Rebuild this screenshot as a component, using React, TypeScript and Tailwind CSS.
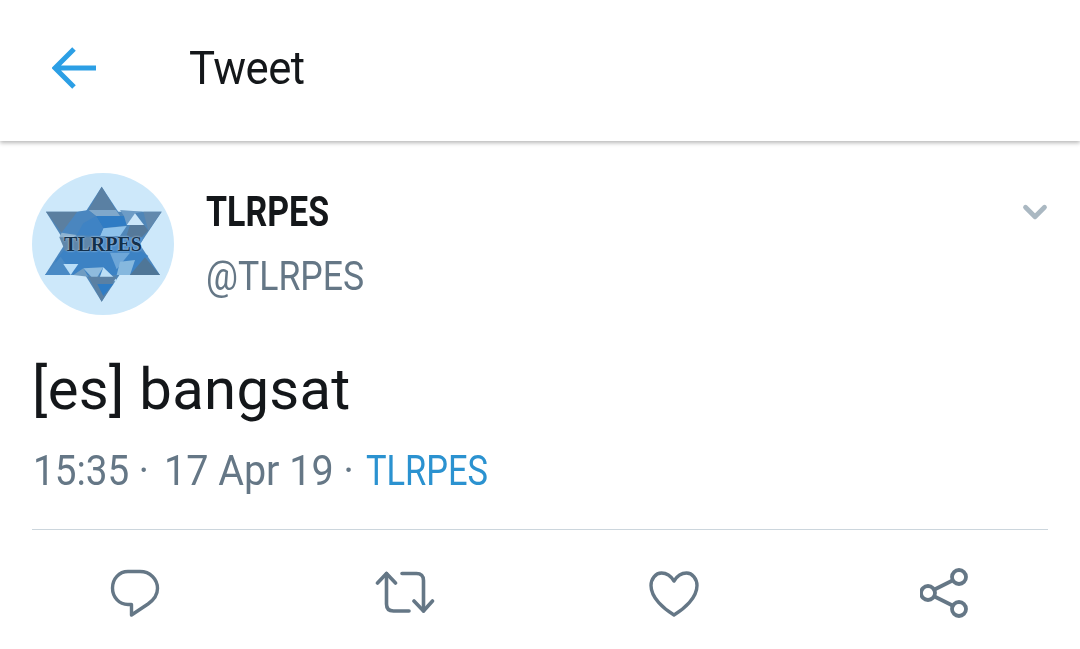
import React from "react";
import { ChevronDown } from "lucide-react";

// facets traced off the avatar, coordinates are in a 3x crop of the picture
const facets: [string, string][] = [
  ["245,80 420,345 75,345", "#4a86bf"],
  ["245,425 425,155 78,155", "#4f86b8"],
  ["245,80 205,150 288,150", "#5a80a3"],
  ["205,150 288,150 300,168 228,168", "#7fa8cb"],
  ["78,155 172,155 125,218", "#5b7fa0"],
  ["172,155 205,150 228,168 170,225 125,218", "#4a86bf"],
  ["228,168 312,168 330,195 250,205", "#2f7cc4"],
  ["300,150 370,155 345,160 320,195 312,168", "#6d9cc6"],
  ["345,160 372,195 320,195", "#cbe6f9"],
  ["370,155 425,155 385,212", "#6289ad"],
  ["330,195 372,195 385,212 350,245 320,225", "#55799a"],
  ["250,205 320,198 300,228 240,228", "#8ec2ea"],
  ["170,225 240,228 250,205 228,168 190,190", "#3f83c4"],
  ["125,218 170,225 140,245 118,232", "#8eb3d1"],
  ["118,232 250,232 230,272 135,272", "#5f86aa"],
  ["250,232 372,232 350,272 230,272", "#4c8ac6"],
  ["130,272 360,272 385,288 330,345 160,345 105,305", "#3c82c4"],
  ["75,345 122,290 160,345", "#4a8ac5"],
  ["130,312 175,312 152,345", "#b9def8"],
  ["160,345 190,325 205,350", "#6f9cc2"],
  ["190,325 250,322 225,362", "#8fbbdd"],
  ["250,322 292,362 232,372", "#bcdff6"],
  ["270,278 330,278 290,328", "#6da6d8"],
  ["300,305 345,300 330,345 290,345", "#86b8de"],
  ["420,345 375,292 330,345", "#4f7697"],
  ["205,350 290,350 245,425", "#5a80a3"],
  ["232,372 280,372 250,408", "#2f7cc4"],
];

const Logo = () => (
  <div className="relative w-[142px] h-[142px] rounded-full bg-[#cde8fa] overflow-hidden">
    <svg viewBox="36 39 426 426" className="w-full h-full blur-[0.5px]">
      {facets.map(([points, fill], i) => (
        <polygon key={i} points={points} fill={fill} />
      ))}
    </svg>
    <div className="absolute inset-x-0 top-[61px] text-center text-[20px] leading-[20px] font-bold text-[#12304c] font-['Liberation_Serif',serif] [text-shadow:0_0_2px_#dcecf8]">
      TLRPES
    </div>
  </div>
);

const ReplyIcon = () => (
  <svg viewBox="0 0 50 50" className="w-[50px] h-[50px] fill-none stroke-[#657786] stroke-[3.4]" strokeLinejoin="round" strokeLinecap="round">
    <path d="M18 3.500h12C40 3.500 47.500 11 47.500 20.500c0 7-4.500 12-9.500 15.500L21.500 47V36.500H18C9 36.500 2.500 29 2.500 20S9 3.500 18 3.500z" />
  </svg>
);

const RetweetIcon = () => (
  <svg viewBox="0 0 60 44" className="w-[60px] h-[44px] fill-none stroke-[#657786] stroke-[3.6]" strokeLinejoin="round" strokeLinecap="round">
    <path d="M2.500 12 L11.500 2.500 L20.500 12" />
    <path d="M11.500 2.500V33c0 4.500 2.500 7 7 7H34" />
    <path d="M57.500 30 L48.500 40 L39 30" />
    <path d="M48.500 40V9.500c0-4.500-2.500-7-7-7H27" />
  </svg>
);

const HeartIcon = () => (
  <svg viewBox="0 0 50 46" className="w-[50px] h-[46px] fill-none stroke-[#657786] stroke-[3.4]" strokeLinejoin="round">
    <path d="M25 10C21 3.500 16 2 12.500 2 6.500 2 2 8 2 14.500 2 27 15 38 25 44 35 38 48 27 48 14.500 48 8 43.500 2 37.500 2 34 2 29 3.500 25 10z" />
  </svg>
);

const ShareIcon = () => (
  <svg viewBox="0 0 50 50" className="w-[50px] h-[50px] fill-none stroke-[#657786] stroke-[3.8]" strokeLinecap="round">
    <circle cx="39" cy="9" r="7" />
    <circle cx="39" cy="41" r="7" />
    <circle cx="8" cy="25" r="7" />
    <path d="M14.500 21.500 32.500 12.500M14.500 28.500 32.500 37.500" />
  </svg>
);

export default function App() {
  return (
    <div className="w-[1080px] h-[649px] bg-white overflow-hidden font-['Roboto',sans-serif]">
      {/* Header */}
      <div className="h-[141px] pb-[6px] flex items-center shadow-[0_2px_4px_rgba(0,0,0,0.28)] relative">
        <svg viewBox="0 0 44 42" className="ml-[52px] w-[44px] h-[42px] fill-none stroke-[#2c9fe5] stroke-[5]">
          <path d="M22 2 L3 21 L22 40M3 21h41" />
        </svg>
        <div className="ml-[93px] text-[46px] leading-[52px] text-[#14171a] tracking-[-0.6px] scale-x-[0.95] origin-left">Tweet</div>
      </div>

      {/* Tweet */}
      <div className="px-[32px]">
        <div className="flex pt-[32px]">
          <Logo />
          <div className="ml-[32px] flex-1">
            <div className="mt-[10px] text-[43px] leading-[56px] font-bold text-[#14171a] scale-x-[0.79] origin-left">TLRPES</div>
            <div className="mt-[10px] text-[40px] leading-[56px] text-[#657786] scale-x-[0.89] origin-left">@TLRPES</div>
          </div>
          <ChevronDown size={38} strokeWidth={3} className="text-[#aab8c2] mt-[20px] -mr-[6px]" />
        </div>

        <div className="mt-[38px] text-[58px] leading-[72px] text-[#14171a] tracking-[0.3px]">[es] bangsat</div>

        <div className="mt-[18px] ml-[1px] flex items-baseline text-[42px] leading-[56px] text-[#657786] whitespace-nowrap">
          <span className="w-[131px] scale-x-[0.92] origin-left">15:35 ·</span>
          <span className="w-[202px] scale-x-[0.94] origin-left">17 Apr 19 ·</span>
          <span className="text-[#2b92d0] scale-x-[0.82] origin-left">TLRPES</span>
        </div>

        <div className="mt-[30px] border-t border-[#ccd6dd]" />

        <div className="h-[119px] flex items-start pt-[38px]">
          <div className="ml-[78px]"><ReplyIcon /></div>
          <div className="ml-[215px] mt-[3px]"><RetweetIcon /></div>
          <div className="ml-[214px] mt-[3px]"><HeartIcon /></div>
          <div className="ml-[221px]"><ShareIcon /></div>
        </div>
      </div>
    </div>
  );
}
